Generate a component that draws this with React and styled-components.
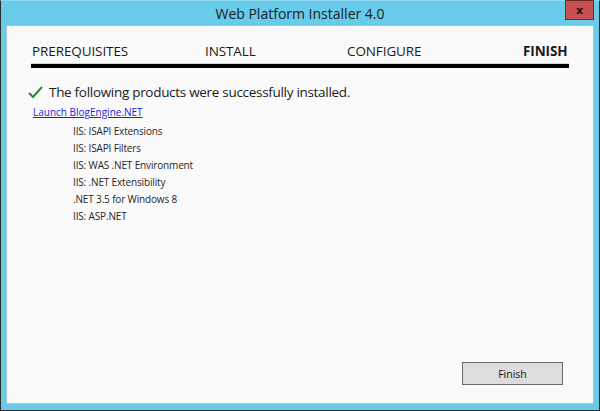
import React from 'react';
import styled, { createGlobalStyle } from 'styled-components';

const GlobalStyle = createGlobalStyle`
  html, body {
    margin: 0;
    padding: 0;
    background: #ffffff;
  }
  body {
    font-family: "Open Sans", "Noto Sans", sans-serif;
  }
`;

const Window = styled.div`
  width: 600px;
  height: 411px;
  box-sizing: border-box;
  display: flex;
  flex-direction: column;
  background: #67cbe9;
  border: 1px solid #2b2b2b;
  border-top-color: #8ed9f0;
  padding: 0 5px 6px 5px;
`;

const TitleBar = styled.div`
  height: 24px;
  display: grid;
  grid-template-columns: 1fr auto 1fr;
  align-items: center;
`;

const Title = styled.div`
  grid-column: 2;
  font-size: 14px;
  color: #1b1b1b;
  padding-top: 1px;
`;

const CloseButton = styled.div`
  grid-column: 3;
  justify-self: end;
  align-self: start;
  width: 27px;
  height: 18px;
  margin-top: -1px;
  background: #c75050;
  border: 1px solid #6e2c2c;
  display: flex;
  align-items: center;
  justify-content: center;
  font-family: "DejaVu Sans", sans-serif;
  font-weight: bold;
  font-size: 11px;
  color: #111;
`;

const Panel = styled.div`
  flex: 1;
  display: flex;
  flex-direction: column;
  background: #fafafa;
  border: 1px solid #a7c3cd;
  padding: 0 24px;
`;

const Tabs = styled.div`
  display: grid;
  grid-template-columns: 173px 142px 176px 1fr;
  padding-top: 16px;
  padding-bottom: 4px;
  border-bottom: 4px solid #000;
  box-shadow: 0 -1px 0 #d6d6d6 inset;
`;

const Tab = styled.div`
  font-size: 13.5px;
  color: #1a1a1a;
  padding-left: 1px;
  letter-spacing: -0.1px;
  font-weight: ${(p) => (p.$active ? 700 : 400)};
  text-align: ${(p) => (p.$active ? 'right' : 'left')};
  padding-right: ${(p) => (p.$active ? '3px' : '0')};
`;

const Body = styled.div`
  display: flex;
  flex-direction: column;
  padding-top: 15px;
`;

const Heading = styled.div`
  display: flex;
  align-items: center;
  gap: 6px;
  margin-left: -3px;
  font-size: 13.5px;
  letter-spacing: -0.3px;
  color: #1a1a1a;
`;

const Link = styled.a`
  margin-top: 3px;
  margin-left: 2px;
  font-size: 10px;
  color: #1c1ce0;
  text-decoration: underline;
  line-height: 17px;
  cursor: pointer;
`;

const ProductList = styled.ul`
  list-style: none;
  margin: 2px 0 0 0;
  padding: 0 0 0 42px;
`;

const Product = styled.li`
  font-size: 10px;
  letter-spacing: -0.15px;
  color: #262626;
  line-height: 17px;
`;

const Footer = styled.div`
  margin-top: auto;
  display: flex;
  justify-content: flex-end;
  padding-bottom: 18px;
  margin-right: 6px;
`;

const Button = styled.button`
  width: 101px;
  height: 23px;
  background: #dddddd;
  border: 1px solid #6a6a6a;
  font-family: "Open Sans", "Noto Sans", sans-serif;
  font-size: 10.5px;
  color: #111;
  padding: 0;
`;

const CheckMark = () => (
  <svg width="15" height="13" viewBox="0 0 15 13">
    <path d="M1 7 L5 11 L14 1" fill="none" stroke="#2f8a2f" strokeWidth="2" />
  </svg>
);

const products = [
  'IIS: ISAPI Extensions',
  'IIS: ISAPI Filters',
  'IIS: WAS .NET Environment',
  'IIS: .NET Extensibility',
  '.NET 3.5 for Windows 8',
  'IIS: ASP.NET',
];

export default function App() {
  return (
    <>
      <GlobalStyle />
      <Window>
        <TitleBar>
          <Title>Web Platform Installer 4.0</Title>
          <CloseButton>x</CloseButton>
        </TitleBar>
        <Panel>
          <Tabs>
            <Tab>PREREQUISITES</Tab>
            <Tab>INSTALL</Tab>
            <Tab>CONFIGURE</Tab>
            <Tab $active>FINISH</Tab>
          </Tabs>
          <Body>
            <Heading>
              <CheckMark />
              The following products were successfully installed.
            </Heading>
            <Link>Launch BlogEngine.NET</Link>
            <ProductList>
              {products.map((p) => (
                <Product key={p}>{p}</Product>
              ))}
            </ProductList>
          </Body>
          <Footer>
            <Button>Finish</Button>
          </Footer>
        </Panel>
      </Window>
    </>
  );
}
